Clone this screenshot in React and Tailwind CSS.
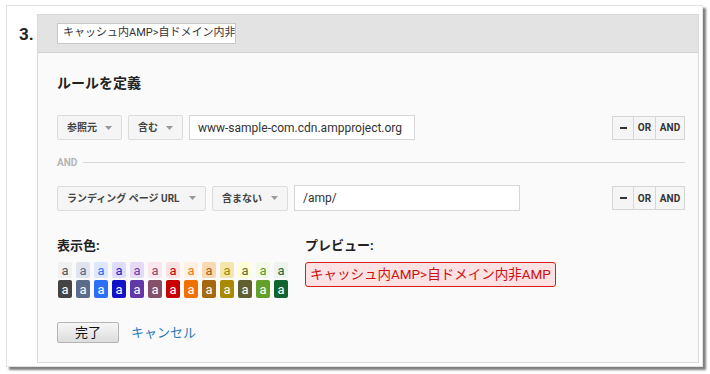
import { useState } from 'react'

const font = "font-['Roboto','Noto_Sans_CJK_JP',sans-serif]"

const swatches = [
  ['bg-[#f0f0f0] text-[#555555]', 'bg-[#444444]'],
  ['bg-[#dfe4ef] text-[#5b6b8c]', 'bg-[#5b6b8c]'],
  ['bg-[#dde8ff] text-[#2e6ef5]', 'bg-[#2c6ef5]'],
  ['bg-[#dedcff] text-[#2424c4]', 'bg-[#1212c6]'],
  ['bg-[#e5daf6] text-[#6a40a8]', 'bg-[#6237a8]'],
  ['bg-[#fbe6ef] text-[#8e4a6b]', 'bg-[#85506a]'],
  ['bg-[#fde2e3] text-[#c80000]', 'bg-[#c80000]'],
  ['bg-[#fef0e2] text-[#f07a10]', 'bg-[#f07000]'],
  ['bg-[#f9d9b3] text-[#a86010]', 'bg-[#a8680e]'],
  ['bg-[#f4e6ad] text-[#a08a00]', 'bg-[#a88a00]'],
  ['bg-[#fdfdd6] text-[#6a6a30]', 'bg-[#5f5f30]'],
  ['bg-[#f2f9e8] text-[#5a9a20]', 'bg-[#63a02a]'],
  ['bg-[#eef3ee] text-[#1a6a3a]', 'bg-[#10652e]'],
]

function Caret() {
  return (
    <svg width="7" height="4" viewBox="0 0 7 4" className="shrink-0">
      <path d="M0 0h7L3.5 4z" fill="#999" />
    </svg>
  )
}

function Dropdown({ label, width }) {
  return (
    <div
      className={`${width} shrink-0 h-[25px] flex items-center justify-between pl-[9px] pr-[9px] bg-[#f5f5f5] border border-[#dcdcdc] rounded-[2px] text-[10px] font-bold text-[#444] whitespace-nowrap`}
    >
      <span>{label}</span>
      <Caret />
    </div>
  )
}

function Ops() {
  return (
    <div className="ml-auto shrink-0 flex h-[24px] border border-[#d6d6d6] bg-[#f5f5f5] text-[10px] font-bold text-[#333]">
      <div className="w-[21px] flex items-center justify-center border-r border-[#d6d6d6]">
        <div className="w-[7px] h-[2px] bg-[#333]" />
      </div>
      <div className="w-[22px] flex items-center justify-center border-r border-[#d6d6d6]">OR</div>
      <div className="w-[28px] flex items-center justify-center">AND</div>
    </div>
  )
}

export default function App() {
  const [name] = useState('キャッシュ内AMP>自ドメイン内非')

  return (
    <div className={`w-[710px] h-[374px] bg-white pt-[5px] pl-[6px] ${font}`}>
      <div className="w-[697px] h-[362px] bg-white border border-[#e2e2e2] shadow-[3px_3px_2px_rgba(0,0,0,0.5)] flex pt-[8px]">
        {/* Step number */}
        <div className="w-[30px] pl-[12px] pt-[12px] text-[17px] font-bold text-[#222] leading-none">3.</div>

        {/* Panel */}
        <div className="w-[662px] h-[349px] border border-[#dadada] bg-[#fafafa] flex flex-col">
          <div className="h-[38px] bg-[#e3e3e3] border-b border-[#d2d2d2] pl-[19px] pt-[8px]">
            <div className="w-[179px] h-[21px] bg-white border border-[#c8c8c8] flex items-center pl-[5px] text-[11px] text-[#333] overflow-hidden whitespace-nowrap">
              {name}
            </div>
          </div>

          <div className="pl-[19px] pr-[13px] flex flex-col">
            <div className="mt-[20px] text-[14px] font-bold text-[#222] leading-[20px]">ルールを定義</div>

            {/* Row 1 */}
            <div className="mt-[22px] flex items-center gap-[6px]">
              <Dropdown label="参照元" width="w-[65px]" />
              <Dropdown label="含む" width="w-[55px]" />
              <div className="w-[226px] shrink-0 h-[25px] bg-white border border-[#d6d6d6] flex items-center pl-[8px] text-[12px] text-[#333] whitespace-nowrap">
                www-sample-com.cdn.ampproject.org
              </div>
              <Ops />
            </div>

            {/* AND separator */}
            <div className="mt-[15px] flex items-center gap-[6px]">
              <span className="text-[10px] font-bold text-[#b5b5b5]">AND</span>
              <div className="flex-1 h-px bg-[#d8d8d8]" />
            </div>

            {/* Row 2 */}
            <div className="mt-[15px] flex items-center gap-[6px]">
              <Dropdown label="ランディング ページ URL" width="w-[149px]" />
              <Dropdown label="含まない" width="w-[76px]" />
              <div className="w-[226px] shrink-0 h-[26px] bg-white border border-[#d6d6d6] flex items-center pl-[8px] text-[12px] text-[#333]">
                /amp/
              </div>
              <Ops />
            </div>

            {/* Colours + preview */}
            <div className="mt-[26px] flex">
              <div className="w-[248px]">
                <div className="text-[13px] font-bold text-[#222] leading-[18px]">表示色:</div>
                <div className="mt-[7px] ml-[1px] flex gap-[4px]">
                  {swatches.map(([light, dark], i) => (
                    <div key={i} className="flex flex-col gap-[2px]">
                      <div className={`w-[14px] h-[16px] rounded-[2px] flex items-center justify-center text-[13px] leading-none ${light}`}>a</div>
                      <div className={`w-[14px] h-[18px] rounded-[2px] flex items-center justify-center text-[13px] leading-none text-white ${dark}`}>a</div>
                    </div>
                  ))}
                </div>
              </div>
              <div>
                <div className="text-[13px] font-bold text-[#222] leading-[18px]">プレビュー:</div>
                <div className="mt-[7px] h-[25px] px-[4px] inline-flex items-center bg-[#fde2e3] border border-[#d81b1b] rounded-[3px] text-[13.5px] text-[#cc1010] whitespace-nowrap">
                  キャッシュ内AMP&gt;自ドメイン内非AMP
                </div>
              </div>
            </div>

            {/* Actions */}
            <div className="mt-[24px] flex items-center gap-[12px]">
              <button className="w-[62px] h-[21px] rounded-[2px] border border-[#b5b5b5] bg-gradient-to-b from-[#f6f6f6] to-[#dddddd] text-[13px] text-[#111] leading-none">
                完了
              </button>
              <span className="text-[13px] text-[#2b7bb9]">キャンセル</span>
            </div>
          </div>
        </div>
      </div>
    </div>
  )
}
